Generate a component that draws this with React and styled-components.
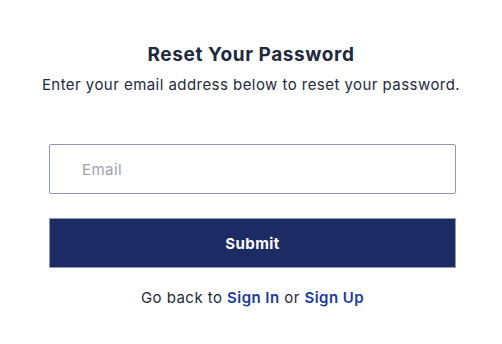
import React from "react";
import styled, { createGlobalStyle } from "styled-components";

const GlobalStyle = createGlobalStyle`
  body {
    margin: 0;
    background: #ffffff;
    font-family: Inter, "Noto Sans", sans-serif;
    color: #1f2937;
  }
`;

const Page = styled.div`
  display: flex;
  flex-direction: column;
  align-items: center;
  padding-top: 42px;
  width: 502px;
`;

const Title = styled.h1`
  margin: 0;
  font-size: 19px;
  font-weight: 700;
  line-height: 26px;
  letter-spacing: 0.6px;
  color: #1e293b;
`;

const Subtitle = styled.p`
  margin: 6px 0 0;
  font-size: 15px;
  line-height: 22px;
  letter-spacing: 0.45px;
  color: #1e293b;
`;

const Form = styled.form`
  display: flex;
  flex-direction: column;
  width: 407px;
  margin-top: 48px;
  margin-left: 3px;
`;

const Input = styled.input`
  box-sizing: border-box;
  height: 50px;
  width: 100%;
  padding: 0 0 0 32px;
  border: 1px solid #8f98b8;
  border-radius: 2px;
  font-family: inherit;
  font-size: 15px;
  letter-spacing: 0.45px;
  color: #1f2937;
  outline: none;

  &::placeholder {
    color: #9ca3af;
  }
`;

const Button = styled.button`
  box-sizing: border-box;
  height: 50px;
  margin-top: 24px;
  border: 1px solid #8f98b8;
  border-radius: 0;
  background: #1c2b63;
  color: #ffffff;
  font-family: inherit;
  font-size: 15px;
  font-weight: 700;
  letter-spacing: 0.45px;
  cursor: pointer;
`;

const Footer = styled.p`
  margin: 19px 0 0;
  font-size: 15px;
  line-height: 22px;
  letter-spacing: 0.45px;
  text-align: center;
  color: #1e293b;
`;

const Link = styled.a`
  color: #1a3a9c;
  font-weight: 600;
  text-decoration: none;
`;

export default function App() {
  return (
    <>
      <GlobalStyle />
      <Page>
        <Title>Reset Your Password</Title>
        <Subtitle>Enter your email address below to reset your password.</Subtitle>
        <Form onSubmit={e => e.preventDefault()}>
          <Input type="email" placeholder="Email" />
          <Button type="submit">Submit</Button>
          <Footer>
            Go back to <Link href="#">Sign In</Link> or <Link href="#">Sign Up</Link>
          </Footer>
        </Form>
      </Page>
    </>
  );
}
